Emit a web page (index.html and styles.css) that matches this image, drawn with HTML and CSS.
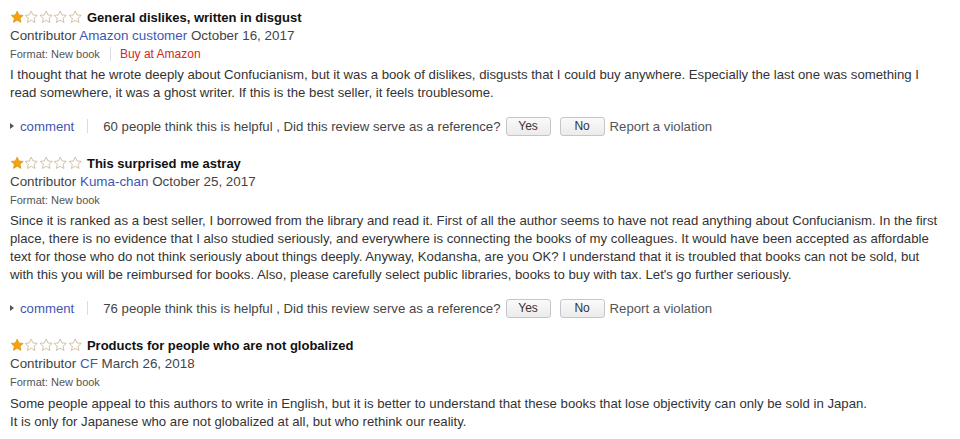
FILE: index.html
```html
<!DOCTYPE html>
<html>
<head>
<meta charset="utf-8">
<link rel="stylesheet" href="styles.css">
</head>
<body>
<div class="reviews">

  <div class="review">
    <div class="title-row">
      <span class="stars">
        <svg viewBox="0 0 14 14" class="star"><path class="full" d="M7 1l1.76 3.8 4.1.45-3.06 2.8.86 4.05L7 10.02 3.34 12.1l.86-4.05-3.06-2.8 4.1-.45z"/></svg><svg viewBox="0 0 14 14" class="star"><path class="empty" d="M7 1l1.76 3.8 4.1.45-3.06 2.8.86 4.05L7 10.02 3.34 12.1l.86-4.05-3.06-2.8 4.1-.45z"/></svg><svg viewBox="0 0 14 14" class="star"><path class="empty" d="M7 1l1.76 3.8 4.1.45-3.06 2.8.86 4.05L7 10.02 3.34 12.1l.86-4.05-3.06-2.8 4.1-.45z"/></svg><svg viewBox="0 0 14 14" class="star"><path class="empty" d="M7 1l1.76 3.8 4.1.45-3.06 2.8.86 4.05L7 10.02 3.34 12.1l.86-4.05-3.06-2.8 4.1-.45z"/></svg><svg viewBox="0 0 14 14" class="star"><path class="empty" d="M7 1l1.76 3.8 4.1.45-3.06 2.8.86 4.05L7 10.02 3.34 12.1l.86-4.05-3.06-2.8 4.1-.45z"/></svg>
      </span>
      <span class="title">General dislikes, written in disgust</span>
    </div>
    <div class="byline">Contributor <a class="link">Amazon customer</a> October 16, 2017</div>
    <div class="format">Format: New book<span class="sep"></span><a class="buy">Buy at Amazon</a></div>
    <p class="body">I thought that he wrote deeply about Confucianism, but it was a book of dislikes, disgusts that I could buy anywhere. Especially the last one was something I<br>read somewhere, it was a ghost writer. If this is the best seller, it feels troublesome.</p>
    <div class="actions">
      <span class="tri"></span><a class="link">comment</a><span class="vsep"></span>
      <span class="helpful">60 people think this is helpful , Did this review serve as a reference?</span>
      <button class="btn">Yes</button><button class="btn">No</button>
      <span class="report">Report a violation</span>
    </div>
  </div>

  <div class="review">
    <div class="title-row">
      <span class="stars">
        <svg viewBox="0 0 14 14" class="star"><path class="full" d="M7 1l1.76 3.8 4.1.45-3.06 2.8.86 4.05L7 10.02 3.34 12.1l.86-4.05-3.06-2.8 4.1-.45z"/></svg><svg viewBox="0 0 14 14" class="star"><path class="empty" d="M7 1l1.76 3.8 4.1.45-3.06 2.8.86 4.05L7 10.02 3.34 12.1l.86-4.05-3.06-2.8 4.1-.45z"/></svg><svg viewBox="0 0 14 14" class="star"><path class="empty" d="M7 1l1.76 3.8 4.1.45-3.06 2.8.86 4.05L7 10.02 3.34 12.1l.86-4.05-3.06-2.8 4.1-.45z"/></svg><svg viewBox="0 0 14 14" class="star"><path class="empty" d="M7 1l1.76 3.8 4.1.45-3.06 2.8.86 4.05L7 10.02 3.34 12.1l.86-4.05-3.06-2.8 4.1-.45z"/></svg><svg viewBox="0 0 14 14" class="star"><path class="empty" d="M7 1l1.76 3.8 4.1.45-3.06 2.8.86 4.05L7 10.02 3.34 12.1l.86-4.05-3.06-2.8 4.1-.45z"/></svg>
      </span>
      <span class="title">This surprised me astray</span>
    </div>
    <div class="byline">Contributor <a class="link">Kuma-chan</a> October 25, 2017</div>
    <div class="format">Format: New book</div>
    <p class="body">Since it is ranked as a best seller, I borrowed from the library and read it. First of all the author seems to have not read anything about Confucianism. In the first<br>place, there is no evidence that I also studied seriously, and everywhere is connecting the books of my colleagues. It would have been accepted as affordable<br>text for those who do not think seriously about things deeply. Anyway, Kodansha, are you OK? I understand that it is troubled that books can not be sold, but<br>with this you will be reimbursed for books. Also, please carefully select public libraries, books to buy with tax. Let's go further seriously.</p>
    <div class="actions">
      <span class="tri"></span><a class="link">comment</a><span class="vsep"></span>
      <span class="helpful">76 people think this is helpful , Did this review serve as a reference?</span>
      <button class="btn">Yes</button><button class="btn">No</button>
      <span class="report">Report a violation</span>
    </div>
  </div>

  <div class="review">
    <div class="title-row">
      <span class="stars">
        <svg viewBox="0 0 14 14" class="star"><path class="full" d="M7 1l1.76 3.8 4.1.45-3.06 2.8.86 4.05L7 10.02 3.34 12.1l.86-4.05-3.06-2.8 4.1-.45z"/></svg><svg viewBox="0 0 14 14" class="star"><path class="empty" d="M7 1l1.76 3.8 4.1.45-3.06 2.8.86 4.05L7 10.02 3.34 12.1l.86-4.05-3.06-2.8 4.1-.45z"/></svg><svg viewBox="0 0 14 14" class="star"><path class="empty" d="M7 1l1.76 3.8 4.1.45-3.06 2.8.86 4.05L7 10.02 3.34 12.1l.86-4.05-3.06-2.8 4.1-.45z"/></svg><svg viewBox="0 0 14 14" class="star"><path class="empty" d="M7 1l1.76 3.8 4.1.45-3.06 2.8.86 4.05L7 10.02 3.34 12.1l.86-4.05-3.06-2.8 4.1-.45z"/></svg><svg viewBox="0 0 14 14" class="star"><path class="empty" d="M7 1l1.76 3.8 4.1.45-3.06 2.8.86 4.05L7 10.02 3.34 12.1l.86-4.05-3.06-2.8 4.1-.45z"/></svg>
      </span>
      <span class="title">Products for people who are not globalized</span>
    </div>
    <div class="byline">Contributor <a class="link">CF</a> March 26, 2018</div>
    <div class="format">Format: New book</div>
    <p class="body">Some people appeal to this authors to write in English, but it is better to understand that these books that lose objectivity can only be sold in Japan.<br>It is only for Japanese who are not globalized at all, but who rethink our reality.</p>
  </div>

</div>
</body>
</html>
```

FILE: styles.css
```css
html, body {
  margin: 0;
  padding: 0;
  background: #fff;
}
body {
  font-family: "Liberation Sans", Arial, sans-serif;
  color: #333;
  font-size: 13px;
}
.reviews {
  padding: 8px 10px 0 10px;
  display: flex;
  flex-direction: column;
  gap: 17px;
}
.review {
  display: flex;
  flex-direction: column;
}
.title-row {
  height: 19px;
  display: flex;
  align-items: center;
}
.stars {
  display: flex;
  margin-right: 5px;
}
.star {
  width: 14.4px;
  height: 14.4px;
  display: block;
}
.full {
  fill: #f4a30c;
  stroke: #d88b04;
  stroke-width: 0.6;
  stroke-linejoin: round;
}
.empty {
  fill: #fff;
  stroke: #c8b592;
  stroke-width: 0.8;
  stroke-linejoin: round;
}
.title {
  font-weight: bold;
  color: #111;
  font-size: 13px;
}
.byline {
  line-height: 18px;
  font-size: 13.4px;
  color: #444;
}
.link {
  color: #3b57b4;
  text-decoration: none;
}
.format {
  line-height: 18px;
  font-size: 11px;
  color: #555;
  display: flex;
  align-items: center;
}
.sep {
  display: inline-block;
  width: 1px;
  height: 14px;
  background: #ddd;
  margin: 0 9px 0 10px;
}
.buy {
  color: #cf2b1e;
  font-size: 12px;
}
.body {
  margin: 3px 0 0 0;
  line-height: 18px;
  font-size: 13.2px;
  color: #333;
  white-space: nowrap;
}
.review:last-child .body {
  margin-top: 4px;
  line-height: 17.5px;
}
.actions {
  margin-top: 13px;
  height: 22px;
  display: flex;
  align-items: center;
  font-size: 13.2px;
  color: #444;
}
.tri {
  width: 0;
  height: 0;
  border-top: 3.5px solid transparent;
  border-bottom: 3.5px solid transparent;
  border-left: 4px solid #555;
  margin-right: 6px;
}
.vsep {
  display: inline-block;
  width: 1px;
  height: 14px;
  background: #ddd;
  margin: 0 15px 0 13px;
}
.helpful {
  margin-right: 5px;
}
.btn {
  font-family: inherit;
  font-size: 12px;
  color: #333;
  width: 45px;
  height: 19px;
  padding: 0;
  border: 1px solid #c6c6c6;
  border-radius: 3px;
  background: linear-gradient(#fafafa, #ebebeb);
  margin-right: 9px;
}
.btn + .btn {
  margin-right: 5px;
}
.report {
  color: #555;
}
```
